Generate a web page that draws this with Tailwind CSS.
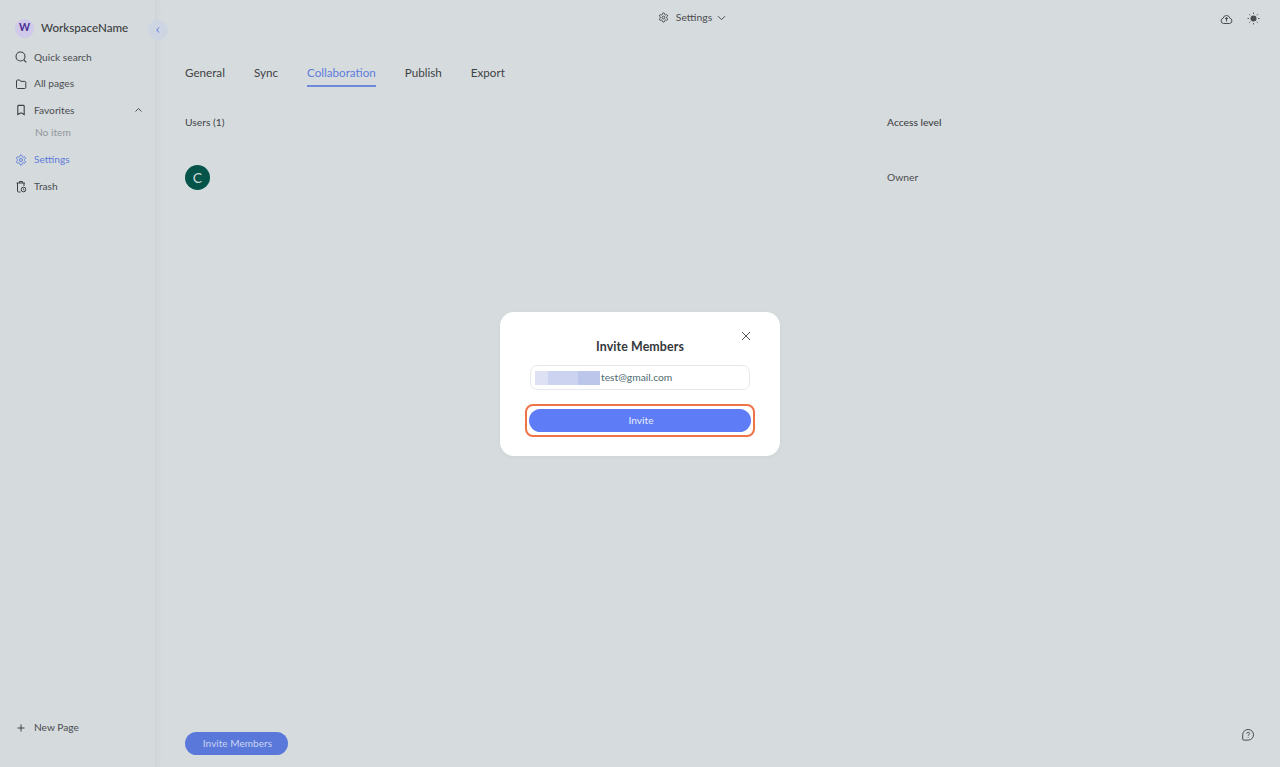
<!DOCTYPE html>
<html lang="en">
<head>
  <meta charset="UTF-8" />
  <title>Settings</title>
  <script src="https://cdn.jsdelivr.net/npm/@tailwindcss/browser@4"></script>
</head>
<body class="h-[767px] w-[1280px] overflow-hidden bg-[#d6dbde] font-['Lato',sans-serif] text-[#3d4043]">
  <div class="flex h-full">
    <!-- sidebar -->
    <aside class="relative flex h-full w-[156px] shrink-0 flex-col border-r border-[#cfd4d8] bg-[#d5dadd] shadow-[2px_0_6px_rgba(0,0,0,0.03)]">
      <div class="mt-[18px] flex h-[20px] items-center gap-[7px] pl-[15px]">
        <div class="flex size-[19px] items-center justify-center rounded-full bg-[#cfc9ea] text-[10.5px] font-bold text-[#4a2f96]">W</div>
        <span class="text-[11.6px] font-medium text-[#3a3d40]">WorkspaceName</span>
      </div>
      <button class="absolute left-[148px] top-[20px] flex size-[20px] items-center justify-center rounded-full bg-[#cdd5e3]">
        <svg width="8" height="8" viewBox="0 0 8 8" fill="none" stroke="#5a78d8" stroke-width="1"><path d="M5 1.500 2.800 4 5 6.500"/></svg>
      </button>
      <nav class="mt-[6px] flex flex-col text-[10.2px] text-[#4a4d50]">
        <a class="flex h-[26.5px] items-center gap-[7px] pl-[15px]">
          <svg width="12" height="12" viewBox="0 0 12 12" fill="none" stroke="#3d4043" stroke-width="1.100"><circle cx="5.500" cy="5.500" r="4.500"/><path d="m9 9 2.300 2.300"/></svg>
          Quick search
        </a>
        <a class="flex h-[26.5px] items-center gap-[7px] pl-[15px]">
          <svg width="12" height="12" viewBox="0 0 12 12" fill="none" stroke="#3d4043" stroke-width="1"><path d="M1.500 3c0-.6.400-1 1-1h2.300l1 1.400h4c.6 0 1 .4 1 1v5.100c0 .6-.4 1-1 1h-7.300c-.6 0-1-.4-1-1z"/></svg>
          All pages
        </a>
        <a class="relative flex h-[26.5px] items-center gap-[7px] pl-[15px]">
          <svg width="12" height="12" viewBox="0 0 12 12" fill="none" stroke="#3d4043" stroke-width="1.100"><path d="M2.800 2.200c0-.5.400-.8.800-.8h4.800c.4 0 .8.300.8.800v8.300L6 8.800l-3.200 1.700z"/></svg>
          Favorites
          <svg class="absolute left-[134px] top-[10px]" width="9" height="6" viewBox="0 0 9 6" fill="none" stroke="#4a4d50" stroke-width="1"><path d="M1.500 4.500 4.500 1.500l3 3"/></svg>
        </a>
        <div class="flex h-[19px] items-center pl-[35px] text-[#93979b]">No item</div>
        <a class="mt-[4px] flex h-[27px] items-center gap-[7px] pl-[15px] text-[#5f7ddb]">
          <svg width="12" height="12" viewBox="0 0 24 24" fill="none" stroke="#5f7ddb" stroke-width="2"><path d="M12.220 2h-.44a2 2 0 0 0-2 2v.18a2 2 0 0 1-1 1.730l-.43.25a2 2 0 0 1-2 0l-.15-.08a2 2 0 0 0-2.730.73l-.22.38a2 2 0 0 0 .73 2.730l.15.1a2 2 0 0 1 1 1.720v.51a2 2 0 0 1-1 1.740l-.15.09a2 2 0 0 0-.73 2.730l.22.38a2 2 0 0 0 2.730.73l.15-.08a2 2 0 0 1 2 0l.43.25a2 2 0 0 1 1 1.730V20a2 2 0 0 0 2 2h.44a2 2 0 0 0 2-2v-.18a2 2 0 0 1 1-1.730l.43-.25a2 2 0 0 1 2 0l.15.08a2 2 0 0 0 2.730-.73l.22-.39a2 2 0 0 0-.73-2.730l-.15-.08a2 2 0 0 1-1-1.740v-.5a2 2 0 0 1 1-1.740l.15-.09a2 2 0 0 0 .73-2.730l-.22-.38a2 2 0 0 0-2.730-.73l-.15.08a2 2 0 0 1-2 0l-.43-.25a2 2 0 0 1-1-1.730V4a2 2 0 0 0-2-2z"/><circle cx="12" cy="12" r="3"/></svg>
          Settings
        </a>
        <a class="flex h-[26.5px] items-center gap-[7px] pl-[15px]">
          <svg width="12" height="13" viewBox="0 0 12 13" fill="none" stroke="#3d4043" stroke-width="1"><path d="M1.500 3h8.500M4.500 3V1.500h3V3M2.500 3v8c0 .5.400 1 1 1h2"/><path d="M9 3v3"/><circle cx="8.500" cy="9.500" r="2.300"/><path d="M8.500 8.500v1.200l.8.400"/></svg>
          Trash
        </a>
      </nav>
      <a class="mt-auto mb-[26px] flex h-[27px] items-center gap-[7px] pl-[15px] text-[10.2px] text-[#4a4d50]">
        <svg width="12" height="12" viewBox="0 0 12 12" fill="none" stroke="#3d4043" stroke-width="1"><path d="M6 2.500v7M2.500 6h7"/></svg>
        New Page
      </a>
    </aside>

    <!-- main -->
    <main class="relative flex min-w-0 flex-1 flex-col">
      <header class="relative flex h-[36px] items-center justify-center pr-[52px] text-[10.4px] text-[#4a4d50]">
        <div class="flex items-center gap-[7px]">
          <svg width="11" height="11" viewBox="0 0 24 24" fill="none" stroke="#3d4043" stroke-width="2"><path d="M12.220 2h-.44a2 2 0 0 0-2 2v.18a2 2 0 0 1-1 1.730l-.43.25a2 2 0 0 1-2 0l-.15-.08a2 2 0 0 0-2.730.73l-.22.38a2 2 0 0 0 .73 2.730l.15.1a2 2 0 0 1 1 1.720v.51a2 2 0 0 1-1 1.740l-.15.09a2 2 0 0 0-.73 2.730l.22.38a2 2 0 0 0 2.730.73l.15-.08a2 2 0 0 1 2 0l.43.25a2 2 0 0 1 1 1.730V20a2 2 0 0 0 2 2h.44a2 2 0 0 0 2-2v-.18a2 2 0 0 1 1-1.730l.43-.25a2 2 0 0 1 2 0l.15.08a2 2 0 0 0 2.730-.73l.22-.39a2 2 0 0 0-.73-2.730l-.15-.08a2 2 0 0 1-1-1.740v-.5a2 2 0 0 1 1-1.740l.15-.09a2 2 0 0 0 .73-2.730l-.22-.38a2 2 0 0 0-2.730-.73l-.15.08a2 2 0 0 1-2 0l-.43-.25a2 2 0 0 1-1-1.730V4a2 2 0 0 0-2-2z"/><circle cx="12" cy="12" r="3"/></svg>
          <span>Settings</span>
          <svg class="ml-[-2px]" width="9" height="6" viewBox="0 0 9 6" fill="none" stroke="#4a4d50" stroke-width="1"><path d="m1 1.200 3.500 3.500L8 1.200"/></svg>
        </div>
        <div class="absolute right-[20px] top-[12px] flex items-center gap-[14px]">
          <svg width="13" height="12" viewBox="0 0 13 12" fill="none" stroke="#4a4d50" stroke-width="1"><path d="M3.500 10.500a2.700 2.700 0 0 1-.4-5.300 3.500 3.500 0 0 1 6.800 0 2.700 2.700 0 0 1-.4 5.300z"/><path d="M6.500 8.500v-4M5 6l1.500-1.500L8 6"/></svg>
          <svg width="13" height="13" viewBox="0 0 13 13" fill="none" stroke="#5a5d60" stroke-width="1"><circle cx="6.500" cy="6.500" r="3" fill="#4a4d50" stroke="none"/><path d="M6.500 .5v1.500M6.500 11v1.500M.5 6.500H2M11 6.500h1.500M2.300 2.300l1 1M9.700 9.700l1 1M2.300 10.700l1-1M9.700 3.300l1-1"/></svg>
        </div>
      </header>

      <div class="px-[29px]">
        <div class="mt-[29px] flex items-start gap-[29px] text-[11.65px] text-[#3f4245]">
          <span class="leading-[15px]">General</span>
          <span class="leading-[15px]">Sync</span>
          <span class="border-b-2 border-[#6f8ad8] pb-[5px] leading-[15px] text-[#5f7ddb]">Collaboration</span>
          <span class="leading-[15px]">Publish</span>
          <span class="leading-[15px]">Export</span>
        </div>
        <div class="mt-[28px] flex text-[10.3px] leading-[14px] text-[#3f4245]">
          <span class="w-[702px]">Users (1)</span>
          <span class="font-medium">Access level</span>
        </div>
        <div class="mt-[36px] flex items-center text-[10.3px] text-[#4a4d50]">
          <div class="flex w-[702px]">
            <div class="flex size-[25px] items-center justify-center rounded-full bg-[#05544a] text-[14px] text-[#d6dbde]">C</div>
          </div>
          <span>Owner</span>
        </div>
      </div>

      <div class="mt-auto mb-[12px] flex items-end justify-between pl-[29px] pr-[25px]">
        <button class="flex h-[23px] w-[103px] items-center justify-center rounded-full bg-[#5a78da] pl-[2px] text-[10.1px] text-[#c9d5f2]">Invite Members</button>
        <svg class="mb-[13px]" width="14" height="14" viewBox="0 0 14 14" fill="none" stroke="#4a4d50" stroke-width="1"><path d="M7.200 1.500a5.300 5.300 0 0 1 0 10.600H2.700a1 1 0 0 1-1-1V6.800a5.300 5.300 0 0 1 5.500-5.300z" stroke-linejoin="round"/><path d="M5.800 5.600c0-.8.600-1.300 1.400-1.300s1.400.5 1.400 1.200c0 1.100-1.400 1.100-1.400 2.200"/><path d="M7.200 8.900v.7"/></svg>
      </div>
    </main>
  </div>

  <!-- dialog -->
  <div class="absolute left-[500px] top-[312px] flex h-[144px] w-[280px] flex-col items-center rounded-[14px] bg-white shadow-[0_1px_4px_rgba(0,0,0,0.04)]">
    <button class="absolute right-[28px] top-[18px]">
      <svg class="block" width="12" height="12" viewBox="0 0 12 12" fill="none" stroke="#5a5d60" stroke-width="1"><path d="m2 2 8 8M10 2l-8 8"/></svg>
    </button>
    <h2 class="mt-[27px] text-[12.4px] leading-[16px] font-bold tracking-[0.1px] text-[#35383b]">Invite Members</h2>
    <div class="mt-[10px] flex h-[25px] w-[220px] items-center rounded-[7px] border border-[#e6e9ec] pl-[4px] text-[10.3px] text-[#4d6a70]">
      <span class="flex h-[14px] w-[65px] shrink-0">
        <span class="w-[13px] bg-[#dde1f3]"></span>
        <span class="w-[30px] bg-[#ccd3f0]"></span>
        <span class="w-[22px] bg-[#bcc5ea]"></span>
      </span>
      <span class="ml-[1px]">test@gmail.com</span>
    </div>
    <div class="mt-[14px] rounded-[8px] border-2 border-[#ee7448] px-[2px] py-[3px]">
      <button class="flex h-[23px] w-[222px] items-center justify-center rounded-full bg-[#5d7cf6] pl-[2px] text-[10.2px] text-[#e8edfd]">Invite</button>
    </div>
  </div>
</body>
</html>
